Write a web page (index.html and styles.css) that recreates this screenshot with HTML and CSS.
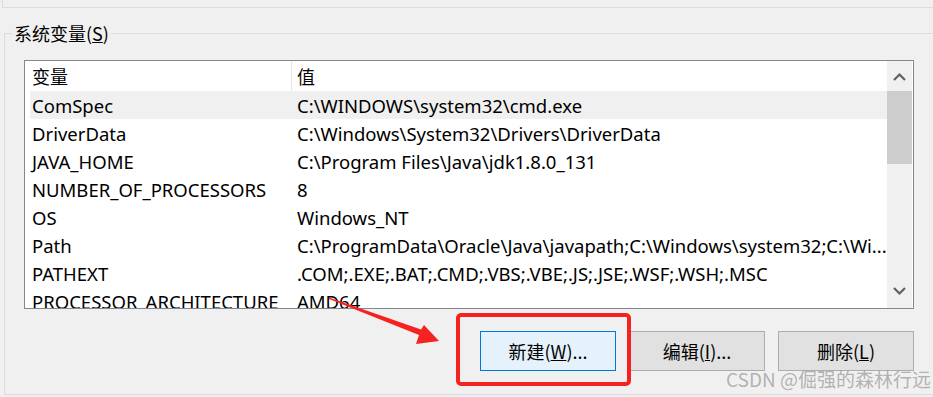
FILE: index.html
```html
<!DOCTYPE html>
<html lang="zh-cn">
<head>
    <meta charset="utf-8">
    <title>系统变量</title>
    <link rel="stylesheet" href="styles.css">
</head>
<body>
<div class="topbox"></div>
<fieldset class="group">
    <legend>系统变量(<u>S</u>)</legend>
    <div class="listbox">
        <div class="list">
            <div class="row head"><span>变量</span><span class="val">值</span></div>
            <div class="row sel"><span>ComSpec</span><span class="val">C:\WINDOWS\system32\cmd.exe</span></div>
            <div class="row"><span>DriverData</span><span class="val">C:\Windows\System32\Drivers\DriverData</span></div>
            <div class="row"><span>JAVA_HOME</span><span class="val">C:\Program Files\Java\jdk1.8.0_131</span></div>
            <div class="row"><span>NUMBER_OF_PROCESSORS</span><span class="val">8</span></div>
            <div class="row"><span>OS</span><span class="val">Windows_NT</span></div>
            <div class="row"><span>Path</span><span class="val">C:\ProgramData\Oracle\Java\javapath;C:\Windows\system32;C:\Wi...</span></div>
            <div class="row"><span>PATHEXT</span><span class="val">.COM;.EXE;.BAT;.CMD;.VBS;.VBE;.JS;.JSE;.WSF;.WSH;.MSC</span></div>
            <div class="row"><span>PROCESSOR_ARCHITECTURE</span><span class="val">AMD64</span></div>
        </div>
        <div class="scroll">
            <svg class="arr" width="25" height="30" viewBox="0 0 25 30"><path d="M7 19 L12.5 13.5 L18 19" fill="none" stroke="#606060" stroke-width="2.2"/></svg>
            <div class="thumb"></div>
            <div class="track"></div>
            <svg class="arr" width="25" height="30" viewBox="0 0 25 30"><path d="M7 10 L12.5 15.5 L18 10" fill="none" stroke="#606060" stroke-width="2.2"/></svg>
        </div>
    </div>
    <div class="btns">
        <span class="btn focus">新建(<u>W</u>)...</span>
        <span class="btn">编辑(<u>I</u>)...</span>
        <span class="btn">删除(<u>L</u>)</span>
    </div>
</fieldset>

<!-- 标注：红框和箭头 -->
<div class="mark"></div>
<svg class="arrow" width="933" height="397" viewBox="0 0 933 397">
    <polygon points="329,297.5 421,329.5 424,325 439,341 416,344 419,335 329,299" fill="#f5231f"/>
</svg>
<div class="wm">CSDN @倔强的森林行远</div>
</body>
</html>
```

FILE: styles.css
```css
body {
    margin: 0;
    width: 933px;
    height: 397px;
    overflow: hidden;
    position: relative;
    background: #f0f0f0;
    font-family: "Noto Sans", "Noto Sans CJK SC", sans-serif;
    font-size: 18.5px;
    color: #000;
}

.topbox {
    height: 7px;
    margin-left: 2px;
    border-left: 1px solid #dcdcdc;
    border-bottom: 1px solid #dcdcdc;
}

.group {
    margin: 15px -20px 0 4px;
    padding: 17px 20px 23px 19px;
    border: 1px solid #dcdcdc;
    border-right: none;
    min-width: 0;
}

.group legend {
    margin-left: -12px;
    padding: 0 2px;
    line-height: 20px;
    font-size: 18px;
    font-family: "Noto Sans CJK SC", sans-serif;
}

.listbox {
    display: flex;
    height: 247px;
    border: 1px solid #828790;
    background: #fff;
    margin-right: 19px;
}

.list {
    flex: 1;
    padding-left: 5px;
    overflow: hidden;
}

.row {
    display: grid;
    grid-template-columns: 261px 1fr;
    height: 28px;
    line-height: 30px;
    white-space: nowrap;
}

.row span {
    padding-left: 2px;
    overflow: hidden;
}

.row .val {
    padding-left: 6px;
}

.head {
    height: 30px;
    line-height: 30px;
    font-size: 18px;
    font-family: "Noto Sans CJK SC", sans-serif;
}

.head .val {
    border-left: 1px solid #e5e5e5;
    padding-left: 5px;
}

.sel {
    background: #f0f0f0;
}

.scroll {
    width: 25px;
    display: flex;
    flex-direction: column;
    background: #f0f0f0;
    margin-right: 1px;
}

.thumb {
    height: 73px;
    background: #cdcdcd;
}

.track {
    flex: 1;
}

.btns {
    display: flex;
    justify-content: flex-end;
    gap: 13px;
    margin-top: 22px;
    margin-right: 19px;
}

.btn {
    width: 134px;
    height: 38px;
    line-height: 38px;
    text-align: center;
    border: 1px solid #adadad;
    background: #e1e1e1;
    font-size: 18px;
    font-family: "Noto Sans CJK SC", sans-serif;
}

.btn.focus {
    border-color: #0078d7;
    background: #e5f1fb;
}

.mark {
    position: absolute;
    left: 456px;
    top: 313px;
    width: 167px;
    height: 65px;
    border: 4px solid #f5231f;
    border-radius: 5px;
}

.arrow {
    position: absolute;
    left: 0;
    top: 0;
}

.wm {
    position: absolute;
    left: 726px;
    top: 365px;
    font-size: 19px;
    color: rgba(150, 150, 150, 0.7);
    font-family: "Noto Sans CJK SC", sans-serif;
}
```
